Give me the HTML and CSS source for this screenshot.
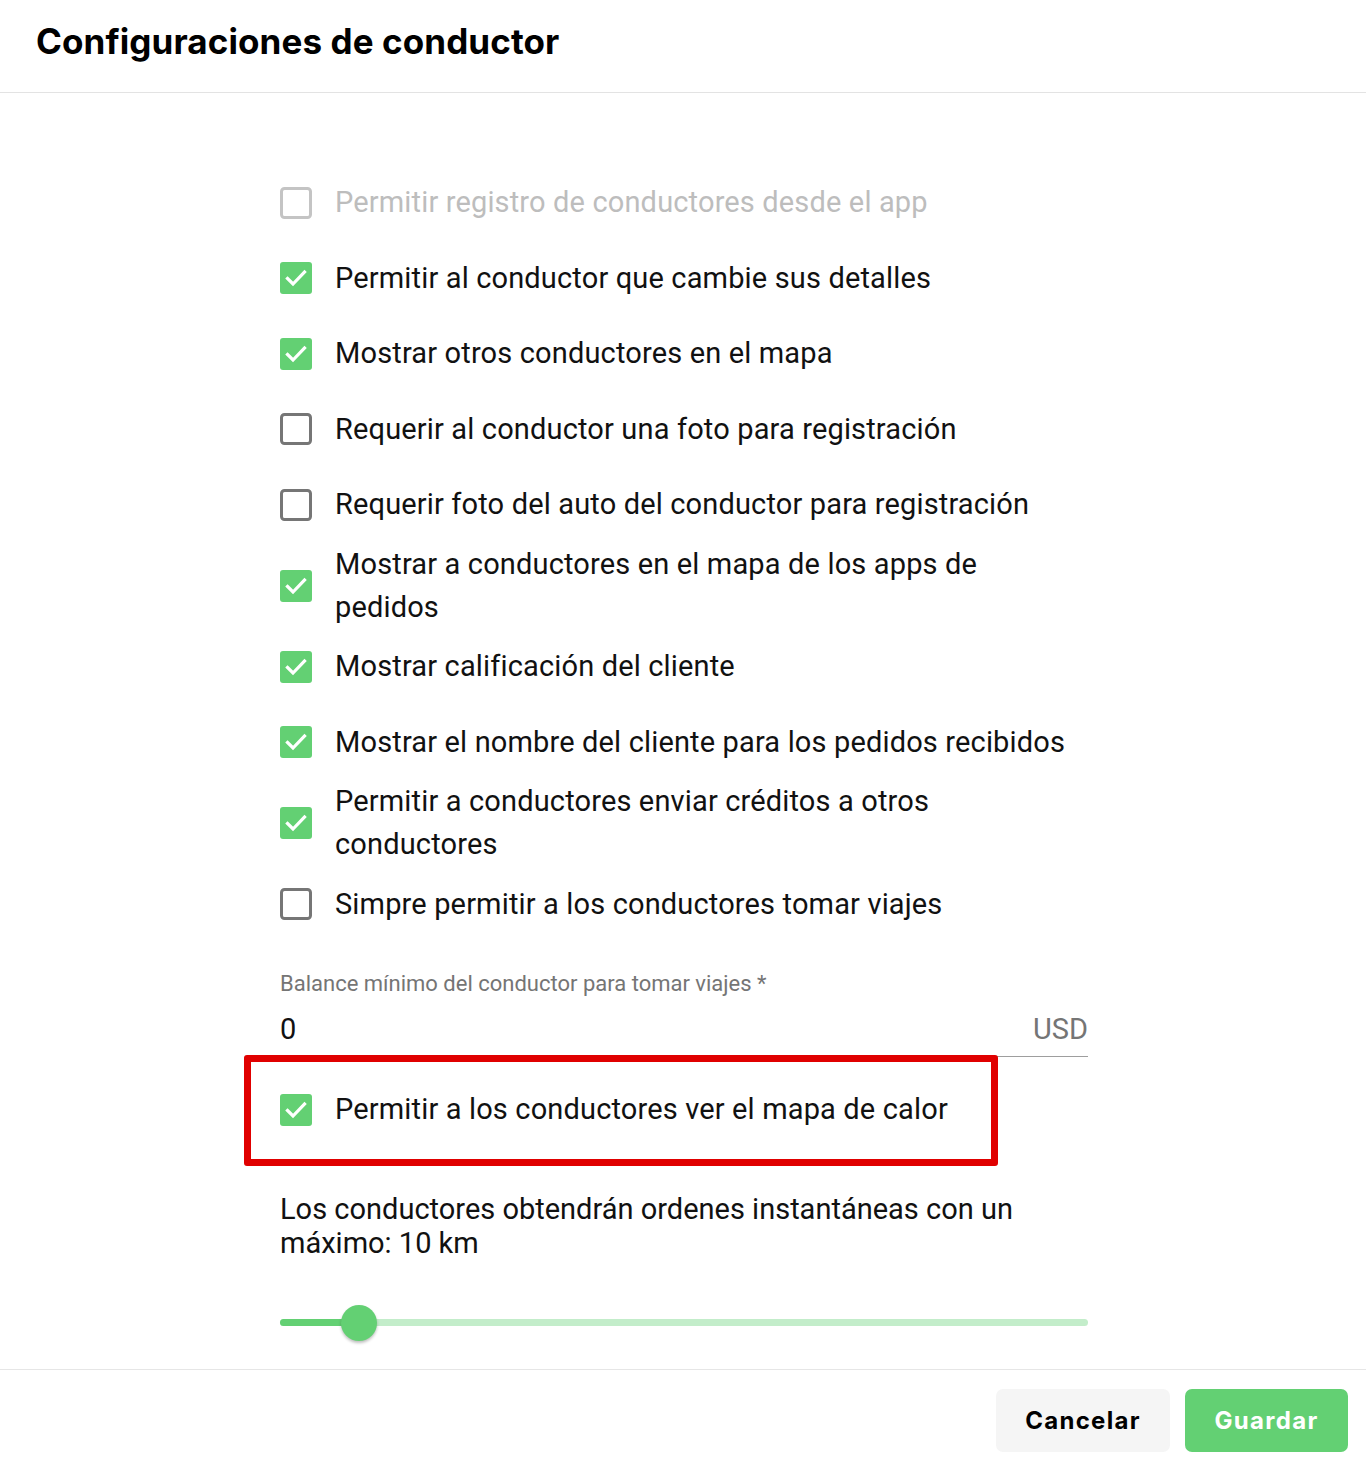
FILE: index.html
```html
<!DOCTYPE html>
<html lang="es">
<head>
<meta charset="utf-8">
<title>Configuraciones de conductor</title>
<link rel="stylesheet" href="styles.css">
</head>
<body>
<div class="dialog">
  <header class="dialog-header">
    <h1 class="dialog-title">Configuraciones de conductor</h1>
  </header>
  <main class="dialog-body">
    <div class="column">
      <label class="check-row disabled">
        <span class="box"><svg viewBox="0 0 32 32" width="32" height="32"><rect x="1.5" y="1.5" width="29" height="29" rx="3" class="empty"/></svg></span>
        <span class="label-text">Permitir registro de conductores desde el app</span>
      </label>
      <label class="check-row">
        <span class="box"><svg viewBox="0 0 32 32" width="32" height="32"><rect width="32" height="32" rx="3" class="filled"/><polyline points="7.5,16.5 13,22 24.5,10" class="tick"/></svg></span>
        <span class="label-text">Permitir al conductor que cambie sus detalles</span>
      </label>
      <label class="check-row">
        <span class="box"><svg viewBox="0 0 32 32" width="32" height="32"><rect width="32" height="32" rx="3" class="filled"/><polyline points="7.5,16.5 13,22 24.5,10" class="tick"/></svg></span>
        <span class="label-text">Mostrar otros conductores en el mapa</span>
      </label>
      <label class="check-row">
        <span class="box"><svg viewBox="0 0 32 32" width="32" height="32"><rect x="1.5" y="1.5" width="29" height="29" rx="3" class="empty"/></svg></span>
        <span class="label-text">Requerir al conductor una foto para registración</span>
      </label>
      <label class="check-row">
        <span class="box"><svg viewBox="0 0 32 32" width="32" height="32"><rect x="1.5" y="1.5" width="29" height="29" rx="3" class="empty"/></svg></span>
        <span class="label-text">Requerir foto del auto del conductor para registración</span>
      </label>
      <label class="check-row">
        <span class="box"><svg viewBox="0 0 32 32" width="32" height="32"><rect width="32" height="32" rx="3" class="filled"/><polyline points="7.5,16.5 13,22 24.5,10" class="tick"/></svg></span>
        <span class="label-text">Mostrar a conductores en el mapa de los apps de pedidos</span>
      </label>
      <label class="check-row">
        <span class="box"><svg viewBox="0 0 32 32" width="32" height="32"><rect width="32" height="32" rx="3" class="filled"/><polyline points="7.5,16.5 13,22 24.5,10" class="tick"/></svg></span>
        <span class="label-text">Mostrar calificación del cliente</span>
      </label>
      <label class="check-row">
        <span class="box"><svg viewBox="0 0 32 32" width="32" height="32"><rect width="32" height="32" rx="3" class="filled"/><polyline points="7.5,16.5 13,22 24.5,10" class="tick"/></svg></span>
        <span class="label-text">Mostrar el nombre del cliente para los pedidos recibidos</span>
      </label>
      <label class="check-row">
        <span class="box"><svg viewBox="0 0 32 32" width="32" height="32"><rect width="32" height="32" rx="3" class="filled"/><polyline points="7.5,16.5 13,22 24.5,10" class="tick"/></svg></span>
        <span class="label-text">Permitir a conductores enviar créditos a otros conductores</span>
      </label>
      <label class="check-row">
        <span class="box"><svg viewBox="0 0 32 32" width="32" height="32"><rect x="1.5" y="1.5" width="29" height="29" rx="3" class="empty"/></svg></span>
        <span class="label-text">Simpre permitir a los conductores tomar viajes</span>
      </label>

      <div class="field">
        <div class="field-label">Balance mínimo del conductor para tomar viajes *</div>
        <div class="field-input">
          <span class="field-value">0</span>
          <span class="field-unit">USD</span>
        </div>
      </div>

      <label class="check-row highlighted">
        <span class="box"><svg viewBox="0 0 32 32" width="32" height="32"><rect width="32" height="32" rx="3" class="filled"/><polyline points="7.5,16.5 13,22 24.5,10" class="tick"/></svg></span>
        <span class="label-text">Permitir a los conductores ver el mapa de calor</span>
        <span class="highlight-frame"></span>
      </label>

      <p class="distance-text">Los conductores obtendrán ordenes instantáneas con un máximo: 10 km</p>

      <div class="slider">
        <div class="slider-track">
          <div class="slider-fill" style="width: 79px"></div>
          <div class="slider-thumb" style="left: 79px"></div>
        </div>
      </div>
    </div>
  </main>
  <footer class="dialog-footer">
    <button class="btn btn-cancel">Cancelar</button>
    <button class="btn btn-save">Guardar</button>
  </footer>
</div>
</body>
</html>
```

FILE: styles.css
```css
* { box-sizing: border-box; }

html, body {
  margin: 0;
  padding: 0;
  background: #fff;
}

body {
  font-family: Roboto, "Liberation Sans", Arial, sans-serif;
  color: #111;
}

.dialog {
  width: 1366px;
  height: 1464px;
  display: flex;
  flex-direction: column;
}

.dialog-header {
  height: 93px;
  border-bottom: 1px solid #e3e3e3;
  padding: 0 36px;
  display: flex;
  align-items: center;
  padding-bottom: 10px;
}

.dialog-title {
  margin: 0;
  font-family: Inter, "Open Sans", sans-serif;
  font-weight: 700;
  font-size: 35px;
  letter-spacing: 0.1px;
  color: #000;
}

.dialog-body {
  flex: 1;
  padding-top: 72px;
  padding-left: 2px;
  display: flex;
  justify-content: center;
}

.column {
  width: 808px;
  display: flex;
  flex-direction: column;
}

.check-row {
  display: flex;
  align-items: center;
  position: relative;
  cursor: pointer;
}

.box {
  width: 32px;
  height: 75.5px;
  flex: none;
  display: flex;
  align-items: center;
  margin-right: 23px;
}

.box svg { display: block; }

.empty {
  fill: none;
  stroke: #767676;
  stroke-width: 3;
}

.filled { fill: #63d073; }

.tick {
  fill: none;
  stroke: #fff;
  stroke-width: 3.2;
  stroke-linecap: square;
}

.label-text {
  max-width: 740px;
  font-size: 29px;
  line-height: 43.25px;
  color: #111;
  letter-spacing: 0.15px;
}

.disabled .empty { stroke: #c4c4c4; }
.disabled .label-text { color: #bdbdbd; }

.field {
  margin-top: 30px;
}

.field-label {
  font-size: 22px;
  line-height: 24px;
  color: #757575;
}

.field-input {
  display: flex;
  align-items: center;
  justify-content: space-between;
  height: 51px;
  margin-top: 10px;
  border-bottom: 1px solid #9e9e9e;
  padding-bottom: 4px;
}

.field-value {
  font-size: 29px;
  color: #111;
}

.field-unit {
  font-size: 29px;
  color: #757575;
}

.highlighted {
  margin-top: 15px;
}

.highlight-frame {
  position: absolute;
  left: -36px;
  right: 90px;
  top: -17px;
  bottom: -18.5px;
  border: 7px solid #e00000;
  border-radius: 3px;
  pointer-events: none;
}

.distance-text {
  margin: 44px 0 0;
  font-size: 29px;
  line-height: 34px;
  color: #111;
}

.slider {
  margin-top: 53px;
  height: 20px;
  display: flex;
  align-items: center;
}

.slider-track {
  position: relative;
  width: 100%;
  height: 7px;
  border-radius: 4px;
  background: #c3edca;
}

.slider-fill {
  height: 100%;
  border-radius: 4px;
  background: #63d073;
}

.slider-thumb {
  position: absolute;
  top: 50%;
  width: 36px;
  height: 36px;
  margin-left: -18px;
  margin-top: -18px;
  border-radius: 50%;
  background: #63d073;
  box-shadow: 0 2px 3px rgba(0,0,0,0.25);
}

.dialog-footer {
  border-top: 1px solid #e6e6e6;
  padding: 19px 18px 12px;
  display: flex;
  justify-content: flex-end;
  gap: 15px;
}

.btn {
  height: 63px;
  border: none;
  border-radius: 7px;
  font-family: Inter, "Open Sans", sans-serif;
  font-weight: 700;
  font-size: 24px;
  letter-spacing: 1.3px;
  cursor: pointer;
}

.btn-cancel {
  width: 174px;
  background: #f5f5f5;
  color: #000;
}

.btn-save {
  width: 163px;
  background: #63d073;
  color: #fff;
}
```
